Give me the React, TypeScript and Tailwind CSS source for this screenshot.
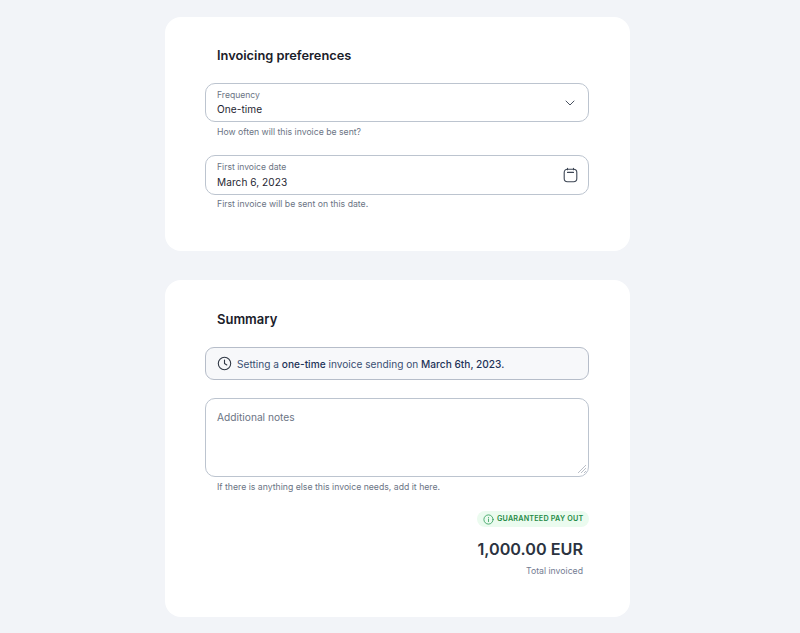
import React from "react";

function Field({ label, value, hint, icon, h, vm }: { label: string; value: string; hint: string; icon: React.ReactNode; h: string; vm: string }) {
  return (
    <div>
      <div className={`flex ${h} items-center justify-between rounded-[10px] border border-[#bcc4cf] pl-[11px] pr-[11px]`}>
        <div>
          <div className="text-[8.6px] leading-[12px] text-[#6b7484]">{label}</div>
          <div className={`${vm} text-[10.1px] leading-[14px] tracking-[0.05px] text-[#1f2733]`}>{value}</div>
        </div>
        {icon}
      </div>
      <div className="pl-[12px] text-[8.7px] leading-[12px] text-[#6b7484]">{hint}</div>
    </div>
  );
}

export default function App() {
  return (
    <div className="flex h-[633px] flex-col items-center overflow-hidden bg-[#f2f4f8] pt-[17px] font-['Inter',sans-serif]">
      <section className="ml-[-5px] h-[234px] w-[465px] rounded-[16px] bg-white pl-[40px] pr-[41px] pt-[30px]">
        <h2 className="pl-[12px] text-[12.8px] font-semibold leading-[17px] text-[#1a2029]">Invoicing preferences</h2>
        <div className="mt-[19px] flex flex-col gap-[17px]">
          <Field
            h="h-[39px] mb-[4px]"
            vm="mt-[1px]"
            label="Frequency"
            value="One-time"
            hint="How often will this invoice be sent?"
            icon={
              <svg width="10" height="6" viewBox="0 0 10 6" fill="none" stroke="#4a5361" strokeWidth="1" strokeLinecap="round" strokeLinejoin="round" className="mr-[2px]">
                <path d="M1 1l4 4 4-4" />
              </svg>
            }
          />
          <Field
            h="h-[40px] mb-[3px]"
            vm="mt-[2px]"
            label="First invoice date"
            value="March 6, 2023"
            hint="First invoice will be sent on this date."
            icon={
              <svg width="15" height="16" viewBox="0 0 15 16" fill="none" stroke="#3d4654" strokeWidth="1.1" strokeLinecap="round" className="mr-[-1px]">
                <rect x="1.2" y="2.2" width="12.6" height="12.6" rx="3.2" />
                <path d="M4.5 1.4v1.4M10.5 1.4v1.4M4.5 5.4h6" />
              </svg>
            }
          />
        </div>
      </section>

      <section className="ml-[-5px] mt-[29px] h-[337px] w-[465px] rounded-[16px] bg-white pl-[40px] pr-[41px] pt-[30px]">
        <h2 className="pl-[12px] text-[13px] font-semibold leading-[18px] text-[#1a2029]">Summary</h2>
        <div className="mt-[19px] flex h-[33px] items-center gap-[5px] rounded-[9px] border border-[#b6bdc9] bg-[#f7f8fa] pl-[11px]">
          <svg width="15" height="15" viewBox="0 0 15 15" fill="none" stroke="#2f3744" strokeWidth="1.1" strokeLinecap="round" strokeLinejoin="round">
            <circle cx="7.5" cy="7.5" r="6.2" />
            <path d="M7.5 4v3.6l2.3 1.3" />
          </svg>
          <p className="text-[10.15px] leading-[14px] text-[#3a4f72]">
            Setting a <span className="font-medium text-[#1e3358]">one-time</span> invoice sending on <span className="font-medium text-[#1e3358]">March 6th, 2023.</span>
          </p>
        </div>
        <div className="relative mt-[18px] h-[79px] rounded-[10px] border border-[#bcc4cf] pl-[11px] pt-[11px] text-[10.2px] leading-[14px] text-[#6b7484]">
          Additional notes
          <svg width="10" height="10" viewBox="0 0 10 10" stroke="#a9b0bb" strokeWidth="0.8" className="absolute bottom-[2px] right-[1px]">
            <path d="M1 9l8-8M4 9l5-5M7 9l2-2" />
          </svg>
        </div>
        <div className="mt-[4px] pl-[12px] text-[8.7px] leading-[12px] text-[#6b7484]">If there is anything else this invoice needs, add it here.</div>
        <div className="mt-[18px] flex flex-col items-end">
          <div className="flex h-[16px] w-[112px] items-center gap-[3px] rounded-full bg-[#ebfbef] pl-[6px] text-[7.2px] font-semibold tracking-[0.2px] text-[#1e8a45]">
            <svg width="11" height="11" viewBox="0 0 11 11" fill="none" stroke="#2b9a55" strokeWidth="0.8" strokeLinecap="round">
              <circle cx="5.5" cy="5.5" r="4.6" />
              <path d="M5.5 5v2.6M5.5 3.4v.1" />
            </svg>
            GUARANTEED PAY OUT
          </div>
          <div className="mr-[6px] mt-[10px] text-[16.2px] font-semibold leading-[24px] text-[#2b3340]">1,000.00 EUR</div>
          <div className="mr-[6px] mt-[4px] text-[8.7px] leading-[12px] text-[#737c92]">Total invoiced</div>
        </div>
      </section>
    </div>
  );
}
